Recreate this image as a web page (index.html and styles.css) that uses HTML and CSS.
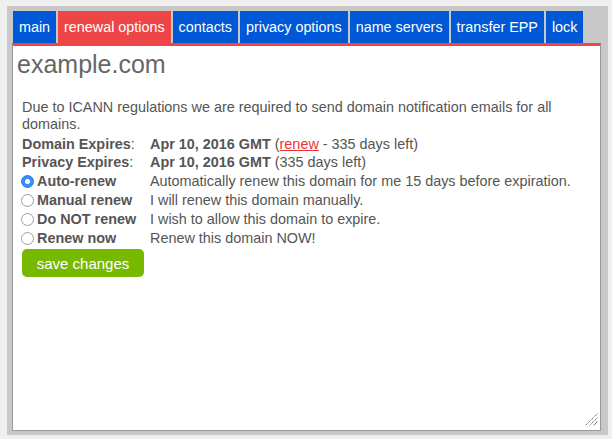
FILE: index.html
```html
<!DOCTYPE html>
<html>
<head>
<meta charset="utf-8">
<title>example.com - renewal options</title>
<link rel="stylesheet" href="styles.css">
</head>
<body>
<div class="frame">
  <div class="tabs">
    <a class="tab">main</a>
    <a class="tab active">renewal options</a>
    <a class="tab">contacts</a>
    <a class="tab">privacy options</a>
    <a class="tab">name servers</a>
    <a class="tab">transfer EPP</a>
    <a class="tab">lock</a>
  </div>
  <div class="box">
    <div class="title">example.com</div>
    <div class="body">
      <p class="note">Due to ICANN regulations we are required to send domain notification emails for all domains.</p>
      <table class="info">
        <tr><td class="label pad"><b>Domain Expires</b>:</td><td><b>Apr 10, 2016 GMT</b> (<a class="renew">renew</a> - 335 days left)</td></tr>
        <tr class="gap"><td class="label pad"><b>Privacy Expires</b>:</td><td><b>Apr 10, 2016 GMT</b> (335 days left)</td></tr>
        <tr class="opt"><td class="label"><span class="radio checked"></span><b>Auto-renew</b></td><td>Automatically renew this domain for me 15 days before expiration.</td></tr>
        <tr class="opt"><td class="label"><span class="radio"></span><b>Manual renew</b></td><td>I will renew this domain manually.</td></tr>
        <tr class="opt"><td class="label"><span class="radio"></span><b>Do NOT renew</b></td><td>I wish to allow this domain to expire.</td></tr>
        <tr class="opt"><td class="label"><span class="radio"></span><b>Renew now</b></td><td>Renew this domain NOW!</td></tr>
      </table>
      <button class="save">save changes</button>
    </div>
    <svg class="grip" width="13" height="13" viewBox="0 0 13 13">
      <line x1="12.5" y1="0.5" x2="0.5" y2="12.5" stroke="#7a7a7a" stroke-width="1" stroke-dasharray="1.5 0.6"/>
      <line x1="12.5" y1="4.5" x2="4.5" y2="12.5" stroke="#7a7a7a" stroke-width="1" stroke-dasharray="1.5 0.6"/>
      <line x1="12.5" y1="8.5" x2="8.5" y2="12.5" stroke="#7a7a7a" stroke-width="1"/>
    </svg>
  </div>
</div>
</body>
</html>
```

FILE: styles.css
```css
html, body {
  margin: 0;
  padding: 0;
  background: #efefef;
}
body {
  font-family: "Liberation Sans", Arial, Helvetica, sans-serif;
  font-size: 14.4px;
  color: #555;
}
.frame {
  margin: 6px 4px 0 7px;
  width: 589px;
  height: 420px;
  padding: 5px 7px 4px 5px;
  background: #c8c8c8;
  display: flex;
  flex-direction: column;
}
.tabs {
  display: flex;
  gap: 2px;
  margin-left: 1px;
  height: 32px;
}
.tab {
  display: block;
  padding: 0 6px;
  font-size: 14.35px;
  line-height: 32px;
  height: 32px;
  color: #fff;
  background: #0058d6;
  white-space: nowrap;
  text-decoration: none;
}
.tab.active {
  background: #ee4646;
}
.box {
  position: relative;
  flex: 1;
  background: #fff;
  border: 1px solid #999;
  border-top: 3px solid #ee4646;
}
.title {
  padding: 3px 0 0 4px;
  font-size: 25px;
  line-height: 30px;
  color: #666;
}
.body {
  padding: 20px 0 0 9px;
}
.note {
  margin: 0;
  line-height: 17px;
  padding-right: 8px;
}
.info {
  border-collapse: separate;
  border-spacing: 2px;
  margin: 1px 0 0 -3px;
}
.info td {
  padding: 0;
  line-height: 16px;
  white-space: nowrap;
  vertical-align: top;
}
.info td.label {
  width: 127px;
}
.info td.pad {
  padding-left: 1px;
  width: 126px;
}
.info tr.gap td {
  padding-bottom: 1px;
}
.info tr.opt td {
  line-height: 17px;
}
.renew {
  color: #e33;
  text-decoration: underline;
}
.radio {
  display: inline-block;
  box-sizing: border-box;
  width: 13px;
  height: 13px;
  border: 1px solid #a0a0a0;
  border-radius: 50%;
  background: #fff;
  vertical-align: -2px;
  margin-right: 3px;
  position: relative;
}
.radio.checked {
  background: #3b8ef0;
  border-color: #2a7ee0;
}
.radio.checked::after {
  content: "";
  position: absolute;
  left: 3px;
  top: 3px;
  width: 5px;
  height: 5px;
  border-radius: 50%;
  background: #fff;
}
.save {
  display: block;
  margin: 0;
  width: 122px;
  height: 28px;
  border: none;
  border-radius: 5px;
  background: #77b800;
  color: #fff;
  font-family: "Liberation Sans", Arial, Helvetica, sans-serif;
  font-size: 15px;
  padding: 0;
}
.grip {
  position: absolute;
  right: 2px;
  bottom: 4px;
}
```
